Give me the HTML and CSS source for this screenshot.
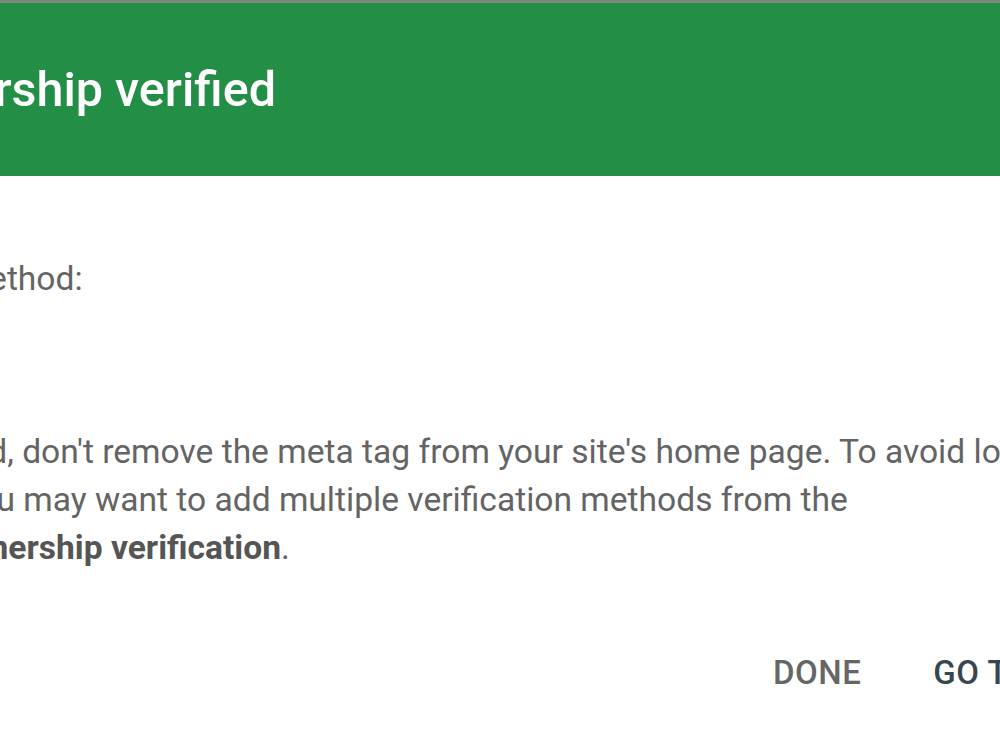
FILE: index.html
```html
<!DOCTYPE html>
<html>
<head>
<meta charset="utf-8">
<link rel="stylesheet" href="styles.css">
</head>
<body>
<div class="backdrop"></div>
<div class="dialog">
  <div class="header">
    <h1 class="title">Ownership verified</h1>
  </div>
  <div class="content">
    <p class="method-label">Verification method:</p>
    <p class="method-name">HTML tag</p>
    <p class="note">To stay verified, don't remove the meta tag from your site's home page. To avoid losing<br>verification, you may want to add multiple verification methods from the<br><b>Settings &gt; Ownership verification</b>.</p>
  </div>
  <div class="actions">
    <button class="btn btn-done">DONE</button>
    <button class="btn btn-go">GO TO PROPERTY</button>
  </div>
</div>
</body>
</html>
```

FILE: styles.css
```css
html, body {
  margin: 0;
  padding: 0;
  width: 1000px;
  height: 750px;
  overflow: hidden;
  background: #7b8a7d;
  font-family: Roboto, "Liberation Sans", sans-serif;
}
.backdrop {
  height: 3px;
}
.dialog {
  margin-left: -218px;
  width: 1500px;
  height: 760px;
  background: #ffffff;
}
.header {
  background: #238e45;
  height: 173px;
  display: flex;
  align-items: center;
  padding-left: 90px;
  box-sizing: border-box;
}
.title {
  margin: 0;
  font-size: 48.5px;
  font-weight: 500;
  color: #ffffff;
  white-space: nowrap;
}
.content {
  padding-top: 79px;
  font-size: 33.6px;
  line-height: 48px;
  color: #646464;
}
.content p {
  margin: 0;
  white-space: nowrap;
}
.note {
  margin-top: 77px !important;
}
.note b {
  font-weight: 700;
  color: #555555;
}
.actions {
  display: flex;
  padding-left: 991px;
  padding-top: 81px;
  gap: 72px;
}
.btn {
  background: none;
  border: none;
  padding: 0;
  font-family: Roboto, "Liberation Sans", sans-serif;
  font-size: 33px;
  font-weight: 500;
  letter-spacing: 0.5px;
  white-space: nowrap;
}
.btn-done { color: #666666; }
.btn-go { color: #37474f; }
```
